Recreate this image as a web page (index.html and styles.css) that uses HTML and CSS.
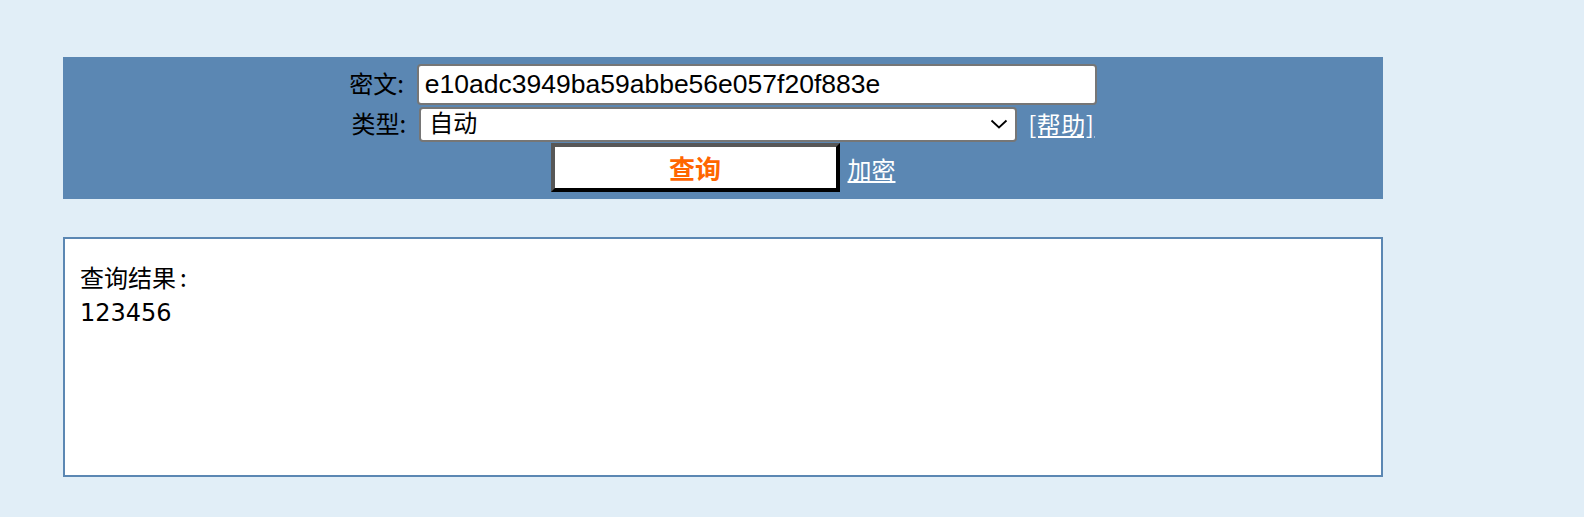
FILE: index.html
```html
<!DOCTYPE html>
<html lang="zh-CN">
<head>
<meta charset="utf-8">
<title>查询</title>
<link rel="stylesheet" href="styles.css">
</head>
<body>
<div class="page">
  <form class="panel">
    <div class="row row-cipher">
      <label class="label" for="cipher">密文:</label>
      <input class="cipher" id="cipher" type="text" value="e10adc3949ba59abbe56e057f20f883e">
    </div>
    <div class="row row-type">
      <label class="label" for="type">类型:</label>
      <div class="select-wrap">
        <select class="type-select" id="type">
          <option>自动</option>
        </select>
        <svg class="chevron" width="18" height="10" viewBox="0 0 18 10"><path d="M1.5 1.5 L9 8.5 L16.5 1.5" fill="none" stroke="#000" stroke-width="1.8"/></svg>
      </div>
      <a class="link" href="#">[帮助]</a>
    </div>
    <div class="row row-submit">
      <button class="submit" type="button">查询</button>
      <a class="link" href="#">加密</a>
    </div>
  </form>
  <div class="result">
    <div class="result-title">查询结果<span class="colon">:</span></div>
    <div class="result-value">123456</div>
  </div>
</div>
</body>
</html>
```

FILE: styles.css
```css
html, body {
  margin: 0;
  padding: 0;
  background: #e1eef7;
}
body {
  font-family: "DejaVu Sans", "Noto Sans CJK SC", sans-serif;
  color: #000;
}
.page {
  padding: 57px 0 0 63px;
  width: 1320px;
}
.panel {
  background: #5b87b3;
  margin: 0;
  padding: 7px 0;
  height: 142px;
  box-sizing: border-box;
  display: flex;
  flex-direction: column;
}
.row {
  display: flex;
  justify-content: center;
  align-items: center;
}
.row-cipher {
  height: 41px;
}
.row-type {
  height: 35px;
  margin-top: 2px;
}
.row-submit {
  height: 49px;
  margin-top: 1px;
  align-items: baseline;
}
.label {
  font-size: 24px;
  line-height: 1;
  font-family: "Noto Sans CJK SC", sans-serif;
  margin-bottom: 4px;
}
.row-cipher .label {
  margin-right: 13px;
}
.row-type .label {
  margin-right: 13px;
}
.cipher {
  box-sizing: border-box;
  width: 680px;
  height: 41px;
  margin: 0;
  border: 2px solid #767676;
  border-radius: 4px;
  padding: 0 6px;
  font-family: "Liberation Sans", Arial, sans-serif;
  font-size: 26.5px;
  color: #000;
  background: #fff;
}
.select-wrap {
  position: relative;
  width: 598px;
  height: 35px;
}
.type-select {
  appearance: none;
  -webkit-appearance: none;
  box-sizing: border-box;
  width: 598px;
  height: 35px;
  margin: 0;
  border: 2px solid #767676;
  border-radius: 4px;
  padding: 0 0 5px 8px;
  background: #fff;
  font-family: "Noto Sans CJK SC", sans-serif;
  font-size: 24px;
  line-height: 26px;
  color: #000;
}
.chevron {
  position: absolute;
  right: 9px;
  top: 12px;
  pointer-events: none;
}
.link {
  color: #fff;
  font-size: 24px;
  line-height: 1;
  font-family: "Noto Sans CJK SC", sans-serif;
  text-decoration: underline;
}
.row-type .link {
  margin-left: 11px;
  margin-bottom: 2px;
  letter-spacing: 0.5px;
}
.row-submit .link {
  margin-left: 8px;
}
.submit {
  box-sizing: border-box;
  width: 289px;
  height: 49px;
  margin: 0;
  padding: 0;
  background: #fff;
  border: 4px solid;
  border-color: #575757 #000 #000 #575757;
  color: #ff6600;
  font-family: "Noto Sans CJK SC", sans-serif;
  font-weight: bold;
  font-size: 26px;
  line-height: 1;
}
.result {
  margin-top: 38px;
  height: 240px;
  box-sizing: border-box;
  border: 2px solid #5b87b3;
  background: #fff;
  padding: 20px 15px;
  font-size: 24px;
  line-height: 36px;
}
.result-title {
  font-family: "Noto Sans CJK SC", sans-serif;
}
.colon {
  margin-left: 4px;
}
```
